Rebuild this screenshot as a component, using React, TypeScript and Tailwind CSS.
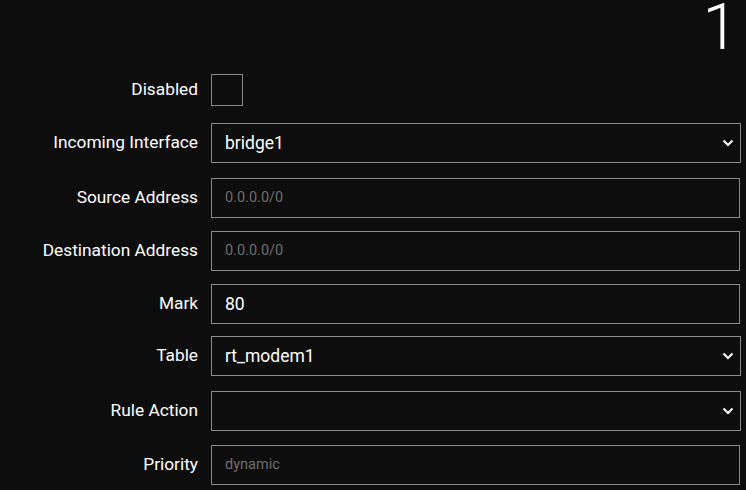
import React from "react";

type Field = {
	label: string;
	kind: "input" | "select";
	value?: string;
	placeholder?: string;
	mt: string;
};

const fields: Field[] = [
	{ label: "Incoming Interface", kind: "select", value: "bridge1", mt: "mt-[17px]" },
	{ label: "Source Address", kind: "input", placeholder: "0.0.0.0/0", mt: "mt-[15px]" },
	{ label: "Destination Address", kind: "input", placeholder: "0.0.0.0/0", mt: "mt-[13px]" },
	{ label: "Mark", kind: "input", value: "80", mt: "mt-[13px]" },
	{ label: "Table", kind: "select", value: "rt_modem1", mt: "mt-[12px]" },
	{ label: "Rule Action", kind: "select", value: "", mt: "mt-[15px]" },
	{ label: "Priority", kind: "input", placeholder: "dynamic", mt: "mt-[14px]" },
];

function Chevron() {
	return (
		<svg width="12" height="8" viewBox="0 0 12 8" className="shrink-0">
			<path d="M1.5 1.5 L6 6 L10.5 1.5" fill="none" stroke="#ffffff" strokeWidth="2" />
		</svg>
	);
}

export default function App() {
	return (
		<div
			className="w-[746px] h-[490px] overflow-hidden bg-[#0d0d0d] text-white relative"
			style={{ fontFamily: "Roboto, 'Liberation Sans', sans-serif" }}
		>
			{/* rule number */}
			<div className="absolute right-[8px] top-0 text-[64px] font-light leading-[56px] text-white">1</div>

			<div className="flex flex-col pt-[74px]">
				<div className="flex items-center h-[32px]">
					<div className="w-[198px] text-right text-[17.3px]">Disabled</div>
					<div className="ml-[13px] w-[32px] h-[32px] border border-[#8a8a8a]"></div>
				</div>

				{fields.map((f) => (
					<div key={f.label} className={`flex items-center h-[40px] ${f.mt}`}>
						<div className="w-[198px] text-right text-[17.3px] whitespace-nowrap">{f.label}</div>
						<div
							className={`ml-[13px] h-full border border-[#8a8a8a] flex items-center justify-between pl-[13px] pr-[6px] ${
								f.kind === "select" ? "w-[530px]" : "w-[529px]"
							}`}
						>
							{f.value ? (
								<span className="text-[17.5px] text-white">{f.value}</span>
							) : (
								<span className="text-[14.5px] text-[#6f6f6f]">{f.placeholder}</span>
							)}
							{f.kind === "select" && <Chevron />}
						</div>
					</div>
				))}
			</div>
		</div>
	);
}
